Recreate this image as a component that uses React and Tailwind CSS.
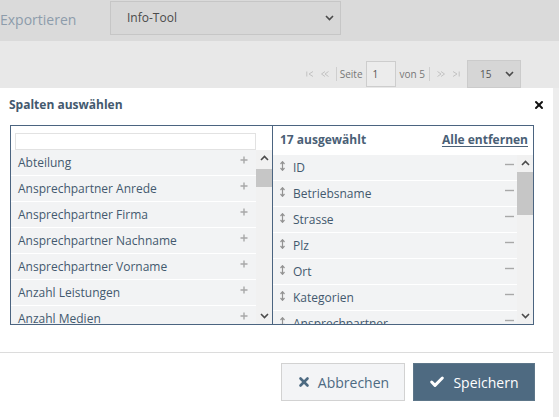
import { X, Check } from 'lucide-react';

const available = [
  'Abteilung',
  'Ansprechpartner Anrede',
  'Ansprechpartner Firma',
  'Ansprechpartner Nachname',
  'Ansprechpartner Vorname',
  'Anzahl Leistungen',
  'Anzahl Medien',
];

const selected = ['ID', 'Betriebsname', 'Strasse', 'Plz', 'Ort', 'Kategorien', 'Ansprechpartner'];

const ChevUp = () => (
  <svg width="9" height="6" viewBox="0 0 9 6">
    <path d="M1 5 L4.5 1.5 L8 5" fill="none" stroke="#4b4b4b" strokeWidth="1.6" />
  </svg>
);

const ChevDown = () => (
  <svg width="9" height="6" viewBox="0 0 9 6">
    <path d="M1 1 L4.5 4.5 L8 1" fill="none" stroke="#4b4b4b" strokeWidth="1.6" />
  </svg>
);

const Plus = () => (
  <svg width="8" height="8" viewBox="0 0 8 8">
    <path d="M4 0.5 V7.5 M0.5 4 H7.5" stroke="#a8a8a8" strokeWidth="1.4" />
  </svg>
);

const Minus = () => (
  <svg width="9" height="3" viewBox="0 0 9 3">
    <path d="M0 1.5 H9" stroke="#a8a8a8" strokeWidth="1.4" />
  </svg>
);

const Drag = () => (
  <svg width="5" height="10" viewBox="0 0 5 10">
    <path d="M2.5 1 V9 M0.5 3 L2.5 0.7 L4.5 3 M0.5 7 L2.5 9.3 L4.5 7" fill="none" stroke="#939393" strokeWidth="1.2" />
  </svg>
);

const Scrollbar = ({ thumbTop, thumbHeight }) => (
  <div className="w-[16px] shrink-0 bg-[#f1f1f1] flex flex-col items-center">
    <div className="h-[16px] w-full flex items-center justify-center">
      <ChevUp />
    </div>
    <div className="flex-1 w-full flex flex-col">
      <div style={{ height: thumbTop }} />
      <div className="w-full bg-[#c6c6c6]" style={{ height: thumbHeight }} />
      <div className="flex-1" />
    </div>
    <div className="h-[16px] w-full flex items-center justify-center">
      <ChevDown />
    </div>
  </div>
);

const PagerIcon = ({ flip, bar }) => (
  <svg width="8" height="6" viewBox="0 0 8 6" className={flip ? 'scale-x-[-1]' : ''}>
    {bar && <path d="M0.8 0.5 V5.5" stroke="#c2c2c2" strokeWidth="1" />}
    <path d={bar ? 'M7 0.5 L3 3 L7 5.5' : 'M4 0.5 L0.5 3 L4 5.5 M7.5 0.5 L4 3 L7.5 5.5'} fill="none" stroke="#c2c2c2" strokeWidth="1" />
  </svg>
);

export default function App() {
  return (
    <div className="relative w-[559px] h-[417px] overflow-hidden bg-[#e8e8e8] font-['Open_Sans',sans-serif]">
      {/* page behind the dialog */}
      <div className="h-[41px] bg-[#dadada] flex items-center">
        <span className="w-[110px] text-[14px] text-[#8d9cab] -mt-[2px]">Exportieren</span>
        <div className="w-[231px] h-[34px] mb-[5px] bg-[#d7d7d7] border border-[#c6c6c6] flex items-center justify-between pl-[16px] pr-[6px]">
          <span className="text-[12px] text-[#4a4a4a]">Info-Tool</span>
          <ChevDown />
        </div>
      </div>
      <div className="h-[47px] flex items-end justify-end pr-[38px]">
        <div className="flex items-center h-[28px] text-[10px] text-[#777]">
          <div className="flex items-center gap-[7px] pr-[7px]">
            <PagerIcon bar />
            <PagerIcon />
          </div>
          <div className="w-px h-[14px] bg-[#cfcfcf]" />
          <span className="px-[3px]">Seite</span>
          <div className="w-[30px] h-[26px] border border-[#cdcdcd] bg-[#ececec] flex items-center pl-[6px] text-[#555]">1</div>
          <span className="px-[4px]">von 5</span>
          <div className="w-px h-[14px] bg-[#cfcfcf]" />
          <div className="flex items-center gap-[7px] px-[7px]">
            <PagerIcon flip />
            <PagerIcon flip bar />
          </div>
          <div className="w-[54px] h-[28px] bg-[#d6d6d6] border border-[#cbcbcb] flex items-center justify-between pl-[12px] pr-[6px] text-[#555]">
            <span>15</span>
            <ChevDown />
          </div>
        </div>
      </div>
      <div className="absolute right-0 top-[88px] w-[6px] h-[329px] bg-[#ededed]" />

      {/* dialog */}
      <div className="absolute left-0 top-[88px] w-[553px] h-[329px] bg-white flex flex-col">
        <div className="h-[37px] flex items-center justify-between pl-[9px] pr-[8px] pb-[3px]">
          <h3 className="text-[12px] font-bold text-[#43596e]">Spalten auswählen</h3>
          <X size={12} strokeWidth={4} className="text-[#111]" />
        </div>

        <div className="mx-[10px] w-[524px] h-[200px] border border-[#4b6480] flex">
          {/* available columns */}
          <div className="w-[261px] flex flex-col">
            <div className="h-[24px] px-[4px] pt-[3px]">
              <input className="w-[241px] h-[17px] border border-[#e2e2e2] bg-white outline-none" />
            </div>
            <div className="flex-1 flex overflow-hidden">
              <div className="flex-1 overflow-hidden">
                {available.map((name) => (
                  <div key={name} className="h-[26px] bg-[#f2f3f4] border-b border-white flex items-center justify-between pl-[7px] pr-[8px]">
                    <span className="text-[12px] text-[#43596e]">{name}</span>
                    <span className="-mt-[6px]"><Plus /></span>
                  </div>
                ))}
              </div>
              <Scrollbar thumbTop={3} thumbHeight={18} />
            </div>
          </div>

          <div className="w-px bg-[#4b6480]" />

          {/* selected columns */}
          <div className="flex-1 flex flex-col">
            <div className="h-[29px] flex items-center justify-between pl-[7px] pr-[5px] pb-[2px]">
              <span className="text-[12px] font-bold text-[#4a6076]">17 ausgewählt</span>
              <span className="text-[12px] font-bold text-[#4a6076] underline underline-offset-2">Alle entfernen</span>
            </div>
            <div className="flex-1 flex overflow-hidden">
              <div className="flex-1 overflow-hidden">
                {selected.map((name) => (
                  <div key={name} className="h-[26px] bg-[#f2f3f4] border-b border-white flex items-center justify-between pl-[7px] pr-[3px]">
                    <div className="flex items-center gap-[8px]">
                      <span className="-mt-[4px]"><Drag /></span>
                      <span className="text-[12px] text-[#43596e]">{name}</span>
                    </div>
                    <span className="-mt-[6px]"><Minus /></span>
                  </div>
                ))}
              </div>
              <Scrollbar thumbTop={1} thumbHeight={43} />
            </div>
          </div>
        </div>

        <div className="mt-[27px] h-px bg-[#dcdcdc]" />

        <div className="flex justify-end gap-[8px] pr-[18px] pt-[10px]">
          <button className="w-[124px] h-[38px] bg-[#f3f4f6] border border-[#d2d2d2] flex items-center justify-center gap-[7px] text-[14px] text-[#4d6a82]">
            <X size={14} strokeWidth={4.5} />
            Abbrechen
          </button>
          <button className="w-[122px] h-[38px] bg-[#4e6a81] border border-[#5d7689] flex items-center justify-center gap-[8px] text-[14px] text-white">
            <Check size={16} strokeWidth={4.5} />
            Speichern
          </button>
        </div>
      </div>
    </div>
  );
}
